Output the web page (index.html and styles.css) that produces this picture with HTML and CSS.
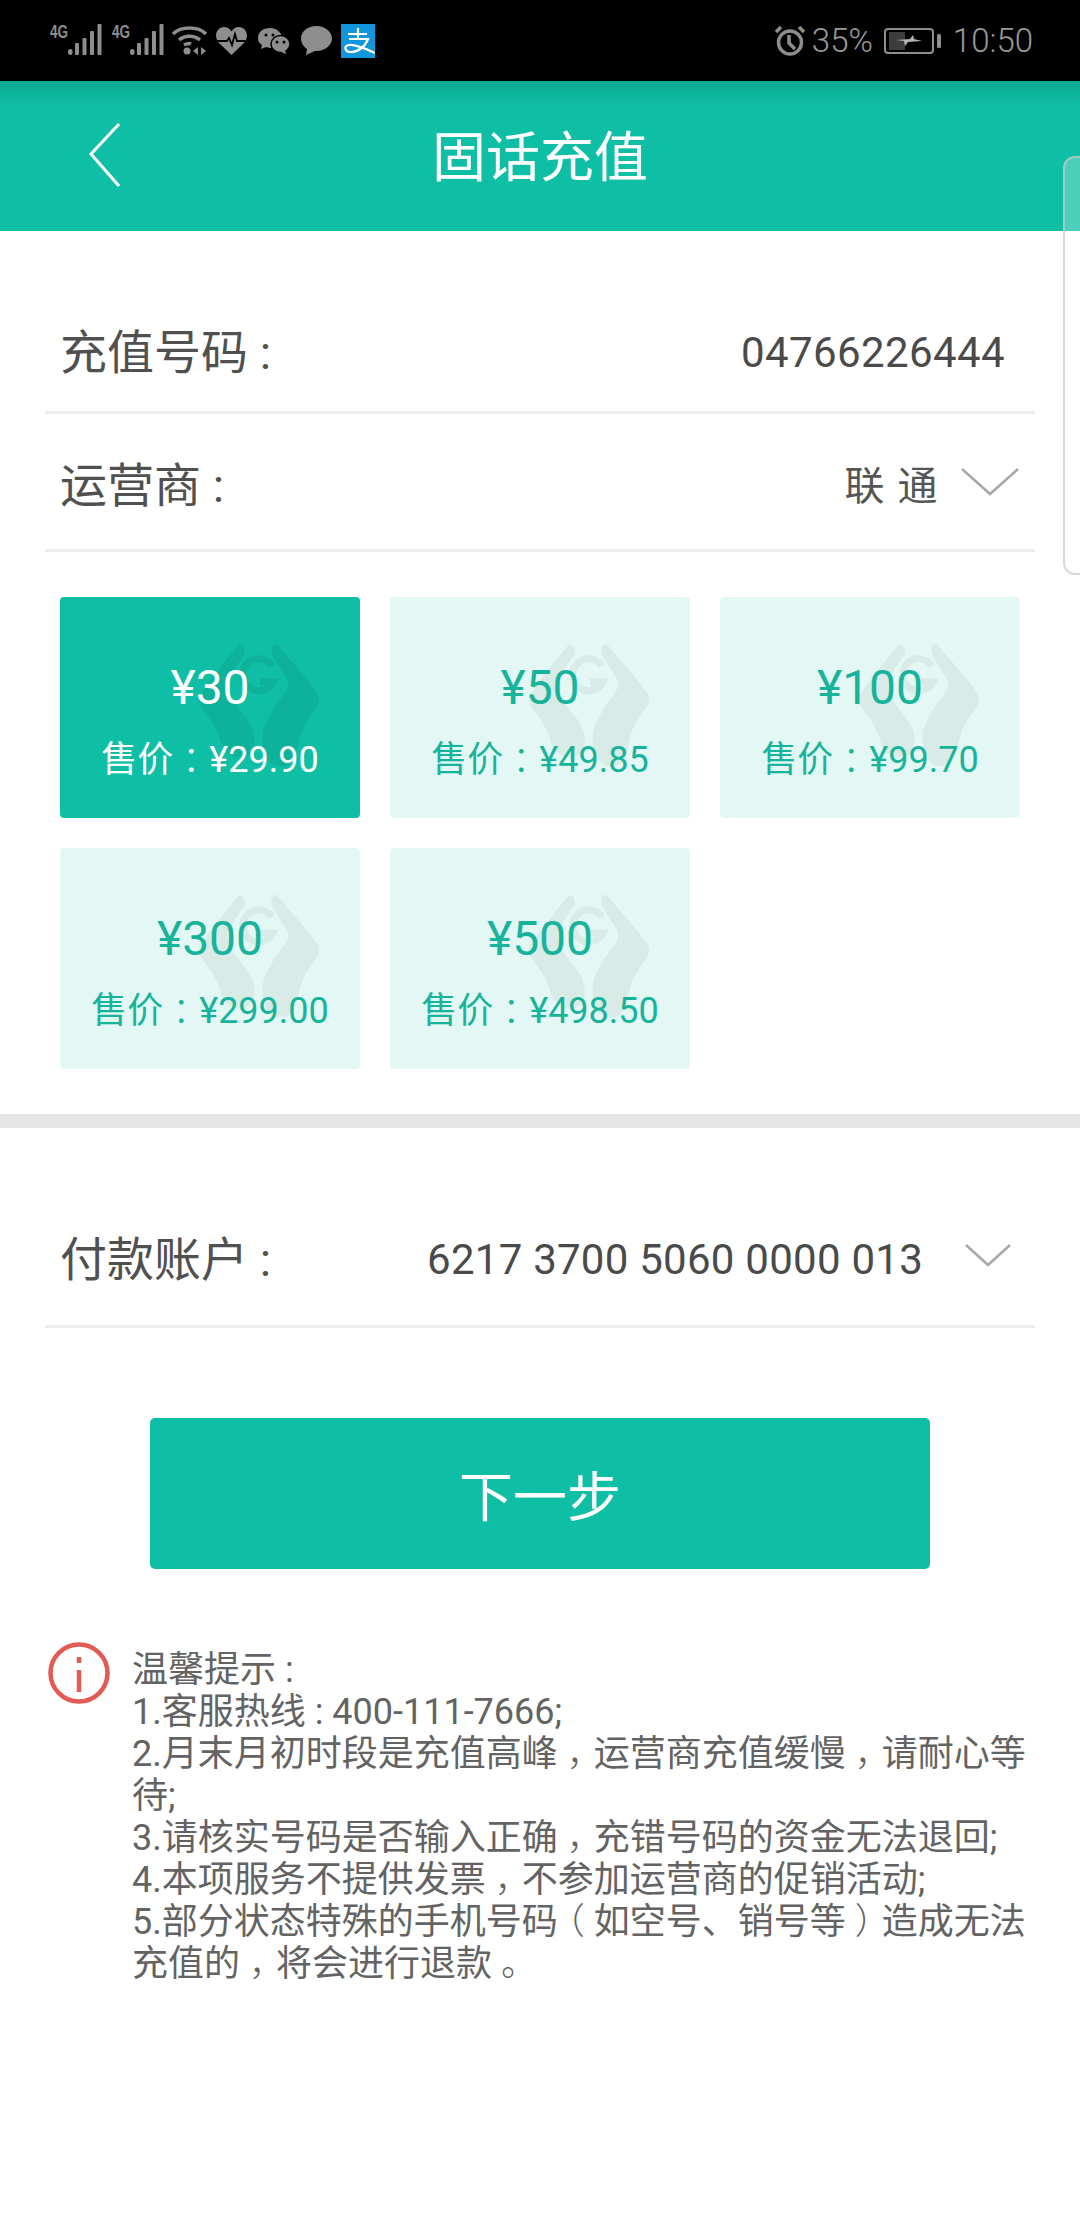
FILE: index.html
```html
<!DOCTYPE html>
<html lang="zh-CN">
  <head>
    <meta charset="UTF-8" />
    <title>固话充值</title>
    <link rel="stylesheet" href="styles.css">
  </head>
  <body>
    <svg class="defs" width="0" height="0">
      <symbol id="hands" viewBox="0 0 121 122">
        <path d="M41 1C30 14 12 36 3 50c-3 4-2 8 1 13 5 8 14 16 19 34 2 8 8 16 19 16 10 0 15-8 14-19-1-14-10-22-17-31-7-10-12-18-8-27 2-8 10-18 15-26 2-5-2-9-5-9z" />
        <path d="M79 1c12 14 30 34 39 47 4 5 3 9 0 15-6 9-14 18-17 32-3 12-4 27-18 27-13 0-18-14-18-28 0-12 6-20 13-32 6-9 13-16 13-23 0-4-16-24-17-31-1-6 3-9 5-7z" />
        <path class="hands-c" d="M74 22a16 16 0 1 0 1 16H62" />
      </symbol>
    </svg>

    <div class="status-bar">
      <div class="status-left">
        <svg class="sb-icon signal" width="54" height="36" viewBox="0 -4 54 36">
          <text x="0" y="14" class="sb-4g" textLength="18" lengthAdjust="spacingAndGlyphs">4G</text>
          <rect x="18" y="25" width="4.500" height="6" rx="2.200" />
          <rect x="25" y="19" width="4" height="12" rx="1" />
          <rect x="32.500" y="14" width="4" height="17" rx="1" />
          <rect x="40" y="7" width="4" height="24" rx="1" />
          <rect x="47.500" y="0" width="4" height="31" rx="1" />
        </svg>
        <svg class="sb-icon signal" width="54" height="36" viewBox="0 -4 54 36">
          <text x="0" y="14" class="sb-4g" textLength="18" lengthAdjust="spacingAndGlyphs">4G</text>
          <rect x="18" y="25" width="4.500" height="6" rx="2.200" />
          <rect x="25" y="19" width="4" height="12" rx="1" />
          <rect x="32.500" y="14" width="4" height="17" rx="1" />
          <rect x="40" y="7" width="4" height="24" rx="1" />
          <rect x="47.500" y="0" width="4" height="31" rx="1" />
        </svg>
        <svg class="sb-icon wifi" width="35" height="30" viewBox="0 0 35 30">
          <path class="sb-line" d="M1 9C9 1 26 1 34 9M7 15c6-5 15-5 21 0" />
          <path class="sb-line" d="M12 20c2-1 5-2 7-1" />
          <circle cx="15" cy="26" r="3.500" />
          <path d="M21 26l5-4v8zM29 22l5 4-5 4z" />
        </svg>
        <svg class="sb-icon heart" width="31" height="28" viewBox="0 0 31 28">
          <path d="M15.500 28L3 16C-3 9 1 0 8 0c3.500 0 6 2 7.500 4.500C17 2 19.500 0 23 0c7 0 11 9 5 16z" />
          <path class="sb-pulse" d="M0 14h11l2-3 3 7 3-11 2 7h10" />
        </svg>
        <svg class="sb-icon wechat" width="32" height="26" viewBox="0 0 32 26">
          <path d="M12 0C5 0 0 4 0 10c0 3 1 5 4 7l-1 4 5-2c1 0 3 1 4 1 7 0 12-5 12-10S19 0 12 0z" />
          <ellipse class="sb-front" cx="22.500" cy="16" rx="9.500" ry="8.500" />
          <path d="M27 22l1 4-5-2z" />
          <circle class="sb-eye" cx="8" cy="7" r="1.500" />
          <circle class="sb-eye" cx="15" cy="7" r="1.500" />
          <circle class="sb-eye" cx="19" cy="14" r="1.500" />
          <circle class="sb-eye" cx="26" cy="14" r="1.500" />
        </svg>
        <svg class="sb-icon bubble" width="31" height="29" viewBox="0 0 31 29">
          <path d="M15.500 0C7 0 0 5 0 12.500 0 17 3 21 6 23l-1 6 9-4h1.500C24 25 31 19 31 12.500S24 0 15.500 0z" />
        </svg>
        <svg class="sb-icon alipay" width="34" height="34" viewBox="0 0 34 34">
          <rect width="34" height="34" fill="#1296db" />
          <path class="sb-ali" d="M7 10h19M17 4v11M8 15h19c-3 8-10 13-17 13-6 0-8-6-2-7 7-1 17 4 26 8" />
        </svg>
      </div>
      <div class="status-right">
        <svg class="sb-icon alarm" width="30" height="30" viewBox="0 0 30 30">
          <circle class="sb-line" cx="15" cy="16.500" r="11.500" />
          <path class="sb-line" d="M14 9v8l6 6M1 6l5-5M29 6l-5-5" />
        </svg>
        <span class="sb-text pct">35%</span>
        <svg class="sb-icon battery" width="57" height="26" viewBox="0 0 57 26">
          <rect class="sb-line thin" x="1" y="1" width="48" height="24" rx="3" />
          <rect x="5" y="4" width="16" height="18" fill="#3d3d3d" />
          <rect x="53" y="6" width="4" height="14" rx="1.500" />
          <path class="sb-bolt" d="M12 12l14-1 3-4 1 4 8 2-14 1-3 4-1-5z" />
        </svg>
        <span class="sb-text time">10:50</span>
      </div>
    </div>

    <header class="topbar">
      <svg class="back" width="34" height="64" viewBox="0 0 34 64">
        <path d="M31 1L3 31l28 32" />
      </svg>
      <h1>固话充值</h1>
    </header>

    <main>
      <section class="form-group">
        <div class="row row-phone">
          <span class="label">充值号码 :</span>
          <span class="value">04766226444</span>
        </div>
        <div class="row row-carrier">
          <span class="label">运营商 :</span>
          <span class="value cjk">联 通</span>
          <svg class="arrow" width="58" height="30" viewBox="0 0 58 30">
            <path d="M1 2l28 25L57 2" />
          </svg>
        </div>
      </section>

      <section class="cards">
        <div class="card active">
          <svg class="hands"><use href="#hands" /></svg>
          <div class="face">¥30</div>
          <div class="price">售价<span class="pn">：</span>¥29.90</div>
        </div>
        <div class="card">
          <svg class="hands"><use href="#hands" /></svg>
          <div class="face">¥50</div>
          <div class="price">售价<span class="pn">：</span>¥49.85</div>
        </div>
        <div class="card">
          <svg class="hands"><use href="#hands" /></svg>
          <div class="face">¥100</div>
          <div class="price">售价<span class="pn">：</span>¥99.70</div>
        </div>
        <div class="card">
          <svg class="hands"><use href="#hands" /></svg>
          <div class="face">¥300</div>
          <div class="price">售价<span class="pn">：</span>¥299.00</div>
        </div>
        <div class="card">
          <svg class="hands"><use href="#hands" /></svg>
          <div class="face">¥500</div>
          <div class="price">售价<span class="pn">：</span>¥498.50</div>
        </div>
      </section>

      <div class="band"></div>

      <section class="form-group account">
        <div class="row row-account">
          <span class="label">付款账户 :</span>
          <span class="value card-no">6217 3700 5060 0000 013</span>
          <svg class="arrow small" width="46" height="24" viewBox="0 0 46 24">
            <path d="M1 2l22 20L45 2" />
          </svg>
        </div>
      </section>

      <button class="next">下一步</button>

      <section class="tips">
        <svg class="info" width="62" height="62" viewBox="0 0 62 62">
          <circle cx="31" cy="31" r="28.500" />
          <path d="M31 15v6M31 28v22" />
        </svg>
        <p>温馨提示 :<br />1.客服热线 : 400-111-7666;<br />2.月末月初时段是充值高峰<span class="pn">，</span>运营商充值缓慢<span class="pn">，</span>请耐心等待;<br />3.请核实号码是否输入正确<span class="pn">，</span>充错号码的资金无法退回;<br />4.本项服务不提供发票<span class="pn">，</span>不参加运营商的促销活动;<br />5.部分状态特殊的手机号码<span class="pn">（</span>如空号、销号等<span class="pn">）</span>造成无法充值的<span class="pn">，</span>将会进行退款<span class="pn">。</span></p>
      </section>
    </main>

    <!-- floating side handle, sits over the header and the form -->
    <div class="side-handle"></div>
  </body>
</html>
```

FILE: styles.css
```css
* {
  box-sizing: border-box;
}

body {
  margin: 0;
  width: 1080px;
  height: 2240px;
  background: #fff;
  font-family: Roboto, "Noto Sans CJK SC", sans-serif;
  overflow: hidden;
  position: relative;
}

.defs {
  position: absolute;
}

/* full-width punctuation sits in the middle of its box */
.pn {
  display: inline-block;
  font-feature-settings: "halt";
  font-weight: 300;
  padding: 0 0.25em;
}

/* Status bar */
.status-bar {
  height: 81px;
  background: #000;
  display: flex;
  justify-content: space-between;
  align-items: flex-start;
  padding: 24px 47px 0 50px;
  color: #8e8e8e;
}

.status-left,
.status-right {
  display: flex;
  align-items: center;
  height: 32px;
}

.status-right {
  margin-top: 1px;
}

.sb-icon {
  fill: #8e8e8e;
  display: block;
  flex: none;
}

.signal {
  margin-top: -4px;
  margin-right: 8px;
}

.wifi {
  margin-left: -2px;
  margin-right: 9px;
}

.heart {
  margin-top: 2px;
  margin-right: 11px;
}

.wechat {
  margin-top: 2px;
  margin-right: 11px;
}

.bubble {
  margin-right: 9px;
}

.alipay {
  margin-top: 2px;
}

.sb-line {
  fill: none;
  stroke: #8e8e8e;
  stroke-width: 3.500;
}

.sb-line.thin {
  stroke-width: 2;
}

.sb-pulse {
  fill: none;
  stroke: #000;
  stroke-width: 1.800;
}

.sb-eye {
  fill: #000;
}

.sb-front {
  stroke: #000;
  stroke-width: 1.500;
}

.sb-4g {
  font-family: "Liberation Sans", sans-serif;
  font-size: 18px;
  font-weight: 700;
}

.sb-ali {
  fill: none;
  stroke: #fff;
  stroke-width: 2.200;
}

.sb-bolt {
  fill: #b5b5b5;
}

.sb-text {
  font-size: 33px;
  line-height: 36px;
  font-weight: 300;
  color: #9a9a9a;
}

.pct {
  margin-left: 7px;
  margin-right: 11px;
}

.time {
  margin-left: 12px;
}

/* Header */
.topbar {
  height: 150px;
  background: linear-gradient(#0fa892 0, #0fbfa5 24px);
  display: flex;
  align-items: center;
  justify-content: center;
  position: relative;
}

.topbar h1 {
  margin: 0;
  padding-top: 6px;
  font-size: 54px;
  font-weight: 400;
  color: #fff;
  line-height: 1;
}

.back {
  position: absolute;
  left: 88px;
  top: 42px;
  fill: none;
  stroke: #fff;
  stroke-width: 3;
}

/* Form rows */
.form-group {
  padding: 54px 45px 0;
}

.row {
  height: 138px;
  border-bottom: 3px solid #eeeeee;
  display: flex;
  align-items: center;
  padding: 0 15px;
  color: #4a4a4a;
}

.row-phone {
  height: 129px;
}

.label {
  font-size: 47px;
  color: #505050;
  flex: 1;
}

.value {
  font-size: 42px;
  letter-spacing: 0.400px;
  margin-right: 15px;
  padding-top: 8px;
}

.value.cjk {
  font-size: 40px;
  color: #555;
  letter-spacing: 1.500px;
  margin-right: 0;
  padding-top: 2px;
}

.arrow {
  fill: none;
  stroke: #a8a8a8;
  stroke-width: 2.500;
  margin-left: 22px;
  margin-right: 1px;
}

.arrow.small {
  margin-left: 42px;
  margin-right: 9px;
}

.card-no {
  margin-right: 0;
  letter-spacing: 0.250px;
  padding-top: 8px;
}

/* Recharge amount grid */
.cards {
  display: grid;
  grid-template-columns: repeat(3, 300px);
  gap: 30px;
  padding: 45px 60px 0;
}

.card {
  height: 221px;
  background: #e3f7f4;
  border-radius: 4px;
  color: #17b39b;
  text-align: center;
  position: relative;
  overflow: hidden;
  display: flex;
  flex-direction: column;
  align-items: center;
  padding-top: 66px;
}

.card.active {
  background: #0fbfa5;
  color: #fff;
}

.hands {
  position: absolute;
  left: 138px;
  top: 47px;
  width: 121px;
  height: 122px;
  fill: #d8ebe7;
  stroke: #d8ebe7;
}

.card.active .hands {
  fill: #0eb29a;
  stroke: #0eb29a;
}

.hands-c {
  fill: none;
  stroke-width: 7;
}

.face {
  font-size: 48px;
  line-height: 50px;
  position: relative;
}

.price {
  font-size: 36px;
  line-height: 44px;
  margin-top: 25px;
  position: relative;
}

.band {
  height: 14px;
  background: #e6e6e6;
  margin-top: 45px;
}

.form-group.account {
  padding-top: 57px;
}

.row-account {
  height: 143px;
}

.next {
  display: block;
  width: 780px;
  height: 151px;
  margin: 90px auto 0;
  border: none;
  border-radius: 5px;
  background: #0fbfa5;
  color: #fff;
  font-family: inherit;
  font-size: 54px;
}

/* Notes under the button */
.tips {
  display: flex;
  padding: 73px 50px 0 48px;
  gap: 22px;
}

.info {
  flex: none;
  fill: none;
  stroke: #e25b55;
  stroke-width: 4.500;
}

.tips p {
  margin: 7px 0 0;
  font-size: 36px;
  line-height: 42px;
  color: #636363;
}

.side-handle {
  position: absolute;
  right: 0;
  top: 156px;
  width: 17px;
  height: 419px;
  border: 2px solid rgba(200, 200, 200, 0.7);
  border-right: none;
  border-radius: 12px 0 0 12px;
  background: rgba(255, 255, 255, 0.25);
}
```
